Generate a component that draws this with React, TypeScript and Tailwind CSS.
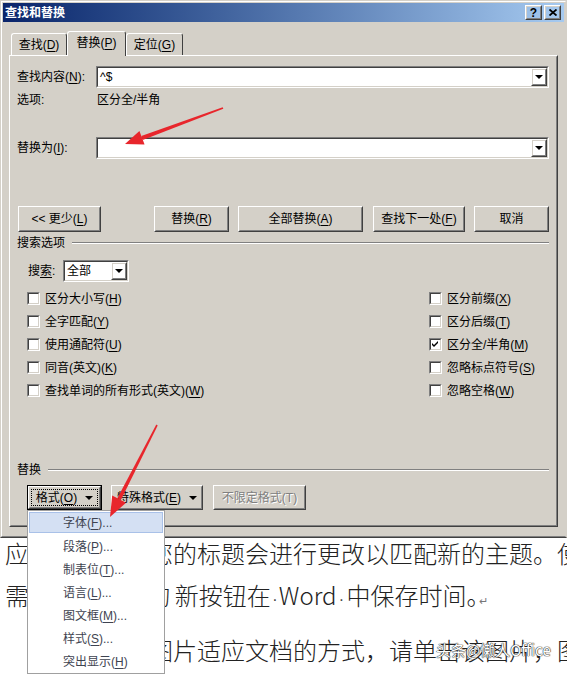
import type { ReactNode } from "react";

const ui = "font-['Liberation_Sans','Noto_Sans_CJK_SC',sans-serif]";

function Key({ children }: { children: ReactNode }) {
  return <span className="underline decoration-1 underline-offset-2">{children}</span>;
}

function Tri() {
  return <span className="inline-block h-0 w-0 border-x-[4px] border-t-[4px] border-x-transparent border-t-black" />;
}

// classic raised 3d box
function Raised({ className = "", children }: { className?: string; children?: ReactNode }) {
  return (
    <div className={`border border-t-white border-l-white border-r-[#404040] border-b-[#404040] ${className}`}>
      <div className="flex h-full w-full items-center justify-center border border-t-[#d4d0c8] border-l-[#d4d0c8] border-r-[#808080] border-b-[#808080]">
        {children}
      </div>
    </div>
  );
}

function Button({ className = "", disabled = false, children }: { className?: string; disabled?: boolean; children: ReactNode }) {
  return (
    <Raised className={`h-full ${className}`}>
      <span className={disabled ? "text-[#808080] [text-shadow:1px_1px_0_#fff]" : "text-black"}>{children}</span>
    </Raised>
  );
}

function Combo({ className = "", children }: { className?: string; children?: ReactNode }) {
  return (
    <div className={`border border-t-[#808080] border-l-[#808080] border-r-white border-b-white ${className}`}>
      <div className="flex h-full border border-t-[#404040] border-l-[#404040] border-r-[#d4d0c8] border-b-[#d4d0c8] bg-white">
        <div className="flex flex-1 items-center pl-[2px]">{children}</div>
        <Raised className="h-full w-[16px]">
          <Tri />
        </Raised>
      </div>
    </div>
  );
}

function Check({ label, checked = false }: { label: ReactNode; checked?: boolean }) {
  return (
    <div className="flex h-[23px] items-center gap-[5px]">
      <div className="h-[13px] w-[13px] border border-t-[#808080] border-l-[#808080] border-r-white border-b-white">
        <div className="h-full border border-t-[#404040] border-l-[#404040] border-r-[#d4d0c8] border-b-[#d4d0c8] bg-white p-[1px]">
          {checked && (
            <svg width="7" height="7" viewBox="0 0 7 7">
              <path d="M0 2 L2 4 L6 0 L6 2 L2 6 L0 4 Z" fill="#000" />
            </svg>
          )}
        </div>
      </div>
      <span>{label}</span>
    </div>
  );
}

function Group({ title }: { title: string }) {
  return (
    <div className="flex h-[14px] items-center gap-[7px]">
      <span>{title}</span>
      <div className="h-[2px] flex-1 border-t border-b border-t-[#808080] border-b-white" />
    </div>
  );
}

function TitleBar() {
  return (
    <div className="flex h-[19px] items-center justify-between bg-linear-to-r from-[#0a246a] to-[#a6caf0] pl-[2px] pr-[3px]">
      <span className="font-bold text-white">查找和替换</span>
      <div className="flex gap-[2px]">
        <Raised className="h-[15px] w-[17px]">
          <span className="text-[12px] leading-none font-bold">?</span>
        </Raised>
        <Raised className="h-[15px] w-[17px]">
          <svg width="8" height="7" viewBox="0 0 8 7">
            <path d="M0.5 0.5 L7.5 6.5 M7.5 0.5 L0.5 6.5" stroke="#000" strokeWidth="1.8" />
          </svg>
        </Raised>
      </div>
    </div>
  );
}

function Tabs() {
  const tab = "flex items-center justify-center rounded-t-[3px] border-t border-l border-r border-t-white border-l-white border-r-[#404040] bg-[#d4d0c8]";
  return (
    <div className="mt-[9px] ml-[6px] flex h-[24px] items-end pl-[2px]">
      <div className={`${tab} h-[22px] w-[56px]`}>
        查找(<Key>D</Key>)
      </div>
      <div className={`${tab} relative z-10 -mb-px h-[25px] w-[59px] pb-[2px]`}>
        替换(<Key>P</Key>)
      </div>
      <div className={`${tab} h-[22px] w-[57px]`}>
        定位(<Key>G</Key>)
      </div>
    </div>
  );
}

function Panel() {
  const left = [
    <>区分大小写(<Key>H</Key>)</>,
    <>全字匹配(<Key>Y</Key>)</>,
    <>使用通配符(<Key>U</Key>)</>,
    <>同音(英文)(<Key>K</Key>)</>,
    <>查找单词的所有形式(英文)(<Key>W</Key>)</>,
  ];
  const right = [
    <>区分前缀(<Key>X</Key>)</>,
    <>区分后缀(<Key>T</Key>)</>,
    <>区分全/半角(<Key>M</Key>)</>,
    <>忽略标点符号(<Key>S</Key>)</>,
    <>忽略空格(<Key>W</Key>)</>,
  ];

  return (
    <div className="ml-[6px] h-[472px] w-[549px] border border-t-white border-l-white border-r-[#404040] border-b-[#404040]">
      <div className="flex h-full flex-col border border-t-[#d4d0c8] border-l-[#d4d0c8] border-r-[#808080] border-b-[#808080] pl-[6px] pr-[7px]">
        {/* find */}
        <div className="mt-[9px] flex h-[22px] items-center">
          <span className="w-[79px]">
            查找内容(<Key>N</Key>):
          </span>
          <Combo className="h-full flex-1">^$</Combo>
        </div>
        <div className="mt-[4px] flex h-[16px] items-center">
          <span className="w-[80px]">选项:</span>
          <span>区分全/半角</span>
        </div>

        {/* replace */}
        <div className="mt-[29px] flex h-[22px] items-center">
          <span className="w-[79px]">
            替换为(<Key>I</Key>):
          </span>
          <Combo className="h-full flex-1" />
        </div>

        {/* action buttons */}
        <div className="mt-[47px] flex h-[26px] pl-[1px]">
          <Button className="w-[83px]">
            &lt;&lt; 更少(<Key>L</Key>)
          </Button>
          <Button className="ml-[53px] w-[75px]">
            替换(<Key>R</Key>)
          </Button>
          <Button className="ml-[9px] w-[125px]">
            全部替换(<Key>A</Key>)
          </Button>
          <Button className="ml-[10px] w-[92px]">
            查找下一处(<Key>F</Key>)
          </Button>
          <Button className="ml-[9px] w-[75px]">取消</Button>
        </div>

        <div className="mt-[4px]">
          <Group title="搜索选项" />
        </div>

        <div className="mt-[10px] flex h-[22px] items-center pl-[11px]">
          <span className="w-[35px]">
            搜<Key>索</Key>:
          </span>
          <Combo className="h-full w-[66px]">全部</Combo>
        </div>

        <div className="mt-[5px] grid grid-cols-[402px_1fr] pl-[10px]">
          {left.map((l, i) => (
            <div key={i} className="contents">
              <Check label={l} />
              <Check label={right[i]} checked={i === 2} />
            </div>
          ))}
        </div>

        <div className="mt-[61px]">
          <Group title="替换" />
        </div>

        <div className="mt-[8px] flex h-[25px] pl-[10px]">
          <div className="h-full w-[75px] border border-black">
            <div className="h-full border border-t-white border-l-white border-r-[#404040] border-b-[#404040]">
              <div className="h-full border border-t-[#d4d0c8] border-l-[#d4d0c8] border-r-[#808080] border-b-[#808080] p-[1px]">
                <div className="flex h-full items-center justify-center gap-[8px] border border-dotted border-black">
                  <span>
                    格式(<Key>O</Key>)
                  </span>
                  <Tri />
                </div>
              </div>
            </div>
          </div>
          <Button className="ml-[9px] w-[92px]">
            <span className="flex items-center gap-[8px]">
              <span>
                特殊格式(<Key>E</Key>)
              </span>
              <Tri />
            </span>
          </Button>
          <Button className="ml-[10px] w-[93px]" disabled>
            不限定格式(T)
          </Button>
        </div>
      </div>
    </div>
  );
}

function Dialog() {
  return (
    <div className="h-[538px] w-[567px] border border-t-[#d4d0c8] border-l-[#d4d0c8] border-r-[#d4d0c8] border-b-[#404040]">
      <div className="flex h-full flex-col border border-t-white border-l-white border-r-[#d4d0c8] border-b-[#808080] bg-[#d4d0c8] p-[1px]">
        <TitleBar />
        <Tabs />
        <Panel />
      </div>
    </div>
  );
}

function Document() {
  const dot = "inline-block text-center font-['Liberation_Sans',sans-serif] text-[16px] text-[#444]";
  return (
    <div className="font-['Noto_Sans_CJK_SC',sans-serif] text-[24px] font-light whitespace-nowrap text-[#222] pl-[5px]">
      <div className="h-[30px] leading-[30px]">应用样式时，您的标题会进行更改以匹配新的主题。使用在</div>
      <div className="mt-[12px] h-[30px] leading-[30px]">
        <span className="tracking-[4.3px]">需要时出现的</span>新按钮在<span className={`${dot} w-[8px]`}>·</span>Word
        <span className={`${dot} w-[10px]`}>·</span>中保存时间。
        <span className="-ml-[12px] text-[11px] text-[#777]">↵</span>
      </div>
      <div className="mt-[25px] h-[30px] leading-[30px] pl-[48px]">若要更改图片适应文档的方式，请单击该图片，图片旁边</div>
    </div>
  );
}

function FormatMenu() {
  const items = [
    <>段落(<Key>P</Key>)...</>,
    <>制表位(<Key>T</Key>)...</>,
    <>语言(<Key>L</Key>)...</>,
    <>图文框(<Key>M</Key>)...</>,
    <>样式(<Key>S</Key>)...</>,
    <>突出显示(<Key>H</Key>)</>,
  ];
  return (
    <div className="absolute top-[510px] left-[27px] h-[164px] w-[138px] border border-[#a0a0a0] bg-white p-[1px] text-[#3e4350]">
      <div className="mb-[2px] flex h-[21px] items-center border border-[#a9c1e8] bg-[#d4e0f3] pl-[33px]">
        字体(<Key>F</Key>)...
      </div>
      {items.map((it, i) => (
        <div key={i} className="flex h-[23px] items-center pl-[34px]">
          {it}
        </div>
      ))}
    </div>
  );
}

function Arrows() {
  return (
    <svg className="pointer-events-none absolute top-0 left-0" width="567" height="676" viewBox="0 0 567 676">
      <g fill="#e8262c">
        <polygon points="223.3,108.8 222.7,107.2 141.3,136.1 142.7,139.9" />
        <polygon points="125,144 139.4,131 144.6,144.6" />
        <polygon points="157.7,425.4 156.3,424.6 117.3,498.3 120.9,500.1" />
        <polygon points="110,517 112.2,495.6 126,502.8" />
      </g>
    </svg>
  );
}

export default function App() {
  return (
    <div className={`relative h-[676px] w-[567px] overflow-hidden bg-white text-[12px] text-black ${ui}`}>
      <Dialog />
      <Document />
      <span className="absolute top-[639px] left-[436px] font-['Noto_Sans_CJK_SC',sans-serif] text-[15px] text-white [text-shadow:0_0_1px_#333,0_0_1px_#333,0_0_1px_#333]">
        头条@懒人Office
      </span>
      <FormatMenu />
      <Arrows />
    </div>
  );
}
